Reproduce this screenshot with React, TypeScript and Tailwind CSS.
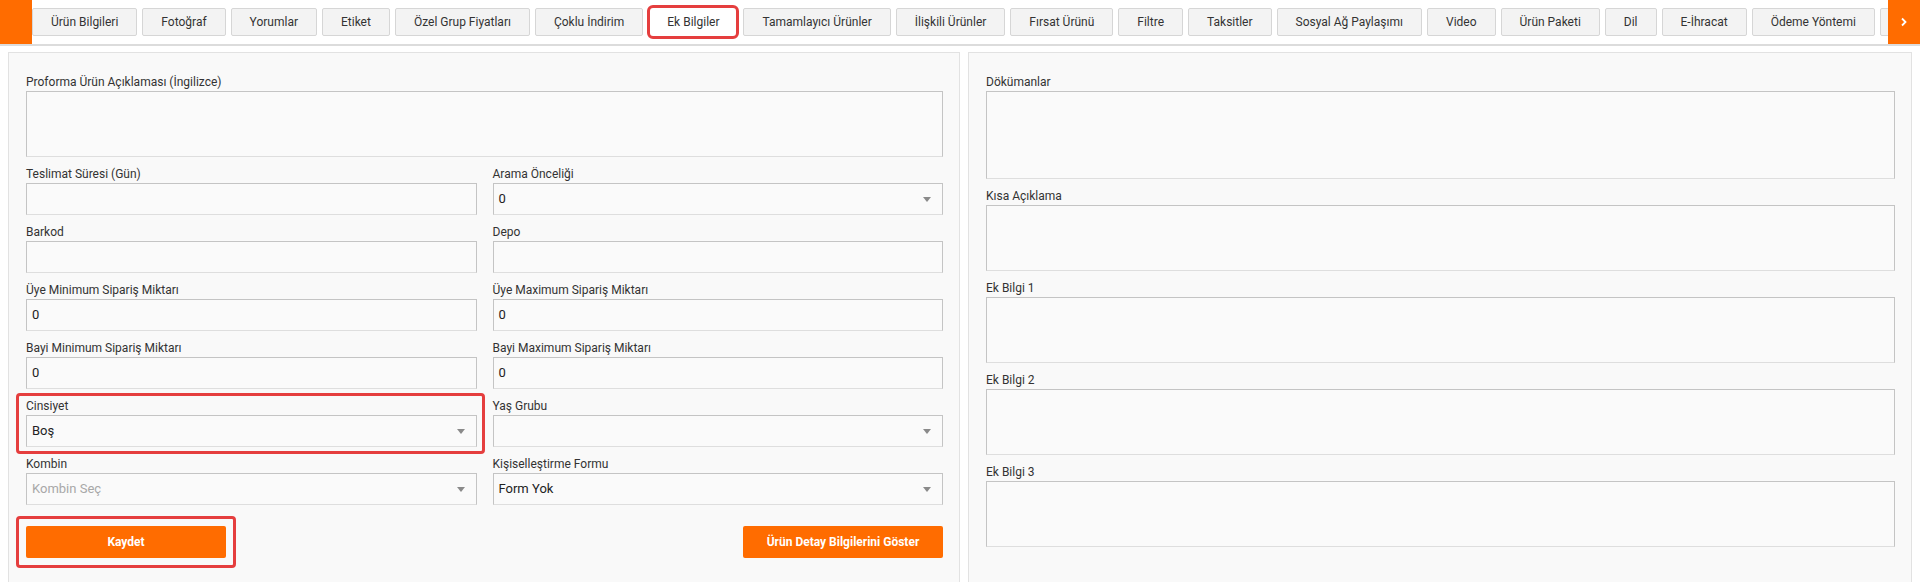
const tabs = [
  "Ürün Bilgileri",
  "Fotoğraf",
  "Yorumlar",
  "Etiket",
  "Özel Grup Fiyatları",
  "Çoklu İndirim",
  "Ek Bilgiler",
  "Tamamlayıcı Ürünler",
  "İlişkili Ürünler",
  "Fırsat Ürünü",
  "Filtre",
  "Taksitler",
  "Sosyal Ağ Paylaşımı",
  "Video",
  "Ürün Paketi",
  "Dil",
  "E-İhracat",
  "Ödeme Yöntemi",
];

const Caret = () => (
  <span className="w-0 h-0 border-l-[4px] border-r-[4px] border-t-[5px] border-l-transparent border-r-transparent border-t-[#8a8a8a]" />
);

const Label = ({ text }: { text: string }) => (
  <div className="text-xs leading-[17px] text-[#333]">{text}</div>
);

const Input = ({ value }: { value?: string }) => (
  <div className="h-[32px] border border-[#c4c4c4] border-b-[#dedede] bg-[#fafafa] px-[5px] flex items-center text-[13px] text-[#222]">
    {value}
  </div>
);

const Select = ({ value, placeholder }: { value?: string; placeholder?: boolean }) => (
  <div className="h-[32px] border border-[#c4c4c4] border-b-[#dedede] bg-[#fafafa] pl-[5px] pr-[11px] flex items-center justify-between text-[13px]">
    <span className={placeholder ? "text-[#a8a8a8]" : "text-[#222]"}>{value}</span>
    <Caret />
  </div>
);

const Field = ({ label, children }: { label: string; children: React.ReactNode }) => (
  <div className="mb-[9px]">
    <Label text={label} />
    {children}
  </div>
);

const TextArea = ({ h }: { h: string }) => (
  <div className={`border border-[#c4c4c4] border-b-[#dedede] bg-[#fafafa] ${h}`} />
);

export default function App() {
  return (
    <div className="w-[1920px] h-[582px] overflow-hidden bg-white font-[Roboto,sans-serif] text-[#333]">
      <div className="flex h-[46px] border-b-2 border-[#dcdcdc]">
        <div className="w-[32px] shrink-0 bg-[#ff6c00]" />
        <div className="flex-1 flex items-center gap-[5px] overflow-hidden">
          {tabs.map((t) =>
            t === "Ek Bilgiler" ? (
              <div
                key={t}
                className="shrink-0 h-[28px] px-[17px] mx-[2px] flex items-center text-xs text-[#333] bg-white rounded-[3px] outline-[3px] outline-solid outline-[#e53e3e]"
              >
                {t}
              </div>
            ) : (
              <div
                key={t}
                className="shrink-0 h-[28px] px-[18px] flex items-center text-xs text-[#333] bg-[#f3f3f3] border border-[#d6d6d6] rounded-[2px]"
              >
                {t}
              </div>
            )
          )}
          {/* next tab, hidden under the scroll button */}
          <div className="shrink-0 w-[90px] h-[28px] bg-[#f3f3f3] border border-[#d6d6d6] rounded-[2px]" />
        </div>
        <div className="w-[32px] shrink-0 bg-[#ff6c00] flex items-center justify-center">
          <svg width="8" height="10" viewBox="0 0 8 10">
            <polyline points="2,1.5 5.5,5 2,8.5" fill="none" stroke="white" strokeWidth="1.8" />
          </svg>
        </div>
      </div>

      <div className="flex gap-2 px-2 pt-[6px]">
        <div className="w-[952px] h-[560px] shrink-0 border border-[#e2e2e2] bg-[#f9f9f9] pl-[17px] pr-4 pt-[21px]">
          <Field label="Proforma Ürün Açıklaması (İngilizce)">
            <TextArea h="h-[66px]" />
          </Field>
          <div className="grid grid-cols-2 gap-x-4">
            <Field label="Teslimat Süresi (Gün)">
              <Input />
            </Field>
            <Field label="Arama Önceliği">
              <Select value="0" />
            </Field>
            <Field label="Barkod">
              <Input />
            </Field>
            <Field label="Depo">
              <Input />
            </Field>
            <Field label="Üye Minimum Sipariş Miktarı">
              <Input value="0" />
            </Field>
            <Field label="Üye Maximum Sipariş Miktarı">
              <Input value="0" />
            </Field>
            <Field label="Bayi Minimum Sipariş Miktarı">
              <Input value="0" />
            </Field>
            <Field label="Bayi Maximum Sipariş Miktarı">
              <Input value="0" />
            </Field>
            <div className="mb-[9px] relative">
              <Label text="Cinsiyet" />
              <Select value="Boş" />
              <div className="absolute -left-[10px] -right-[8px] -top-[5px] -bottom-[7px] border-[3px] border-[#e53e3e] rounded-[4px] pointer-events-none" />
            </div>
            <Field label="Yaş Grubu">
              <Select />
            </Field>
            <Field label="Kombin">
              <Select value="Kombin Seç" placeholder />
            </Field>
            <Field label="Kişiselleştirme Formu">
              <Select value="Form Yok" />
            </Field>
          </div>
          <div className="flex justify-between mt-3">
            <div className="relative">
              <button className="w-[200px] h-[32px] bg-[#ff6c00] text-white text-xs font-bold rounded-[2px]">
                Kaydet
              </button>
              <div className="absolute -inset-[10px] border-[3px] border-[#e53e3e] rounded-[4px] pointer-events-none" />
            </div>
            <button className="w-[200px] h-[32px] bg-[#ff6c00] text-white text-xs font-bold rounded-[2px]">
              Ürün Detay Bilgilerini Göster
            </button>
          </div>
        </div>

        <div className="flex-1 h-[560px] border border-[#e2e2e2] bg-[#f9f9f9] pl-[17px] pr-4 pt-[21px]">
          <Field label="Dökümanlar">
            <TextArea h="h-[88px]" />
          </Field>
          <Field label="Kısa Açıklama">
            <TextArea h="h-[66px]" />
          </Field>
          <Field label="Ek Bilgi 1">
            <TextArea h="h-[66px]" />
          </Field>
          <Field label="Ek Bilgi 2">
            <TextArea h="h-[66px]" />
          </Field>
          <Field label="Ek Bilgi 3">
            <TextArea h="h-[66px]" />
          </Field>
        </div>
      </div>
    </div>
  );
}
